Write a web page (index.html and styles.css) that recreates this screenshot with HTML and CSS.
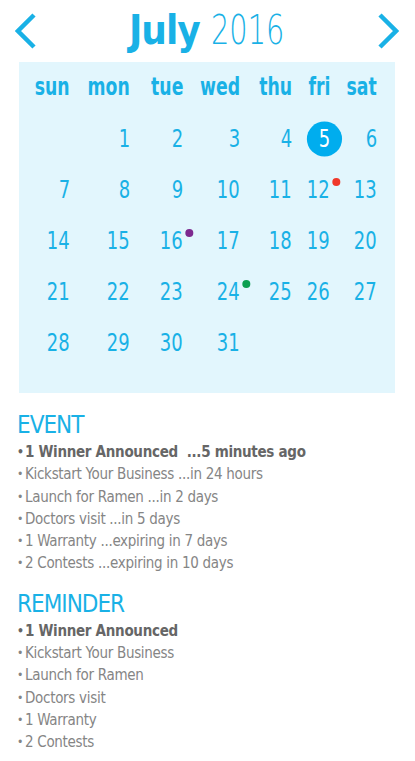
FILE: index.html
```html
<!DOCTYPE html>
<html>
<head>
<meta charset="utf-8">
<link rel="stylesheet" href="styles.css">
</head>
<body>
<div class="header">
  <svg class="chev" width="22" height="36" viewBox="0 0 22 36"><polyline points="19,2 3,18 19,34" fill="none" stroke="#19b1e6" stroke-width="4.5"/></svg>
  <div class="title"><span class="month">July</span> <span class="year">2016</span></div>
  <svg class="chev" width="22" height="36" viewBox="0 0 22 36"><polyline points="3,2 19,18 3,34" fill="none" stroke="#19b1e6" stroke-width="4.5"/></svg>
</div>
<div class="cal">
  <div class="dow"><span>sun</span></div><div class="dow"><span>mon</span></div><div class="dow"><span>tue</span></div><div class="dow"><span>wed</span></div><div class="dow"><span>thu</span></div><div class="dow"><span>fri</span></div><div class="dow"><span>sat</span></div>
  <div class="d"></div><div class="d"><span>1</span></div><div class="d"><span>2</span></div><div class="d"><span>3</span></div><div class="d"><span>4</span></div><div class="d"><span class="today">5</span></div><div class="d"><span>6</span></div>
  <div class="d"><span>7</span></div><div class="d"><span>8</span></div><div class="d"><span>9</span></div><div class="d"><span>10</span></div><div class="d"><span>11</span></div><div class="d"><span class="dot red">12</span></div><div class="d"><span>13</span></div>
  <div class="d"><span>14</span></div><div class="d"><span>15</span></div><div class="d"><span class="dot purple">16</span></div><div class="d"><span>17</span></div><div class="d"><span>18</span></div><div class="d"><span>19</span></div><div class="d"><span>20</span></div>
  <div class="d"><span>21</span></div><div class="d"><span>22</span></div><div class="d"><span>23</span></div><div class="d"><span class="dot green">24</span></div><div class="d"><span>25</span></div><div class="d"><span>26</span></div><div class="d"><span>27</span></div>
  <div class="d"><span>28</span></div><div class="d"><span>29</span></div><div class="d"><span>30</span></div><div class="d"><span>31</span></div><div class="d"></div><div class="d"></div><div class="d"></div>
</div>
<div class="section event">
  <h2>EVENT</h2>
  <ul>
    <li class="strong">1 Winner Announced &nbsp;...5 minutes ago</li>
    <li>Kickstart Your Business ...in 24 hours</li>
    <li>Launch for Ramen ...in 2 days</li>
    <li>Doctors visit ...in 5 days</li>
    <li>1 Warranty ...expiring in 7 days</li>
    <li>2 Contests ...expiring in 10 days</li>
  </ul>
</div>
<div class="section reminder">
  <h2>REMINDER</h2>
  <ul>
    <li class="strong">1 Winner Announced</li>
    <li>Kickstart Your Business</li>
    <li>Launch for Ramen</li>
    <li>Doctors visit</li>
    <li>1 Warranty</li>
    <li>2 Contests</li>
  </ul>
</div>
</body>
</html>
```
FILE: styles.css
```css
body {
  margin: 0;
  background: #fff;
  font-family: "DejaVu Sans Condensed", "DejaVu Sans", sans-serif;
}
.header {
  height: 62px;
  display: flex;
  align-items: center;
  justify-content: space-between;
  padding: 0 16px 0 15px;
  box-sizing: border-box;
}
.chev { display: block; }
.title {
  color: #19b1e6;
  font-size: 40px;
  line-height: 50px;
  margin-top: -2px;
  white-space: nowrap;
}
.month {
  font-weight: bold;
  letter-spacing: -1px;
}
.year {
  display: inline-block;
  font-family: "DejaVu Sans", sans-serif;
  font-weight: 200;
  transform: scaleX(0.72);
  transform-origin: left center;
  margin-right: -28px;
}
.cal {
  margin: 0 20px 0 19px;
  background: #e2f6fd;
  display: grid;
  grid-template-columns: 51px 60px 53px 57px 52px 38px 47px;
  grid-auto-rows: 51px;
  padding-bottom: 25px;
}
.dow, .d {
  text-align: right;
  line-height: 51px;
  color: #19b1e6;
}
.dow span, .d span {
  position: relative;
  display: inline-block;
  transform: scaleX(0.8);
  transform-origin: right center;
}
.dow {
  font-weight: bold;
  font-size: 24px;
}
.d { font-size: 25px; }
.today { color: #fff; z-index: 0; }
.today::before {
  content: "";
  position: absolute;
  width: 44px;
  height: 35px;
  border-radius: 50%;
  background: #00adee;
  left: 50%;
  top: 50%;
  transform: translate(-50%, -50%);
  z-index: -1;
}
.dot::after {
  content: "";
  position: absolute;
  width: 10px;
  height: 8px;
  border-radius: 50%;
  right: -13px;
  top: 14px;
}
.red::after { background: #f0382a; }
.purple::after { background: #7d2a8f; }
.green::after { background: #0b9f50; }
.section {
  padding: 0 17px;
}
.event { margin-top: 18px; }
.reminder { margin-top: 15px; }
h2 {
  margin: 0 0 2px;
  font-weight: normal;
  font-size: 24px;
  line-height: 28px;
  letter-spacing: -1px;
  color: #19b1e6;
}
ul {
  list-style: none;
  margin: 0;
  padding: 0;
}
li {
  font-size: 15px;
  line-height: 22.3px;
  letter-spacing: -0.3px;
  color: #858585;
}
li::before {
  content: "\2022";
  display: inline-block;
  width: 8px;
  font-size: 12px;
  vertical-align: 1px;
}
li.strong {
  font-weight: bold;
  color: #666;
}
```
